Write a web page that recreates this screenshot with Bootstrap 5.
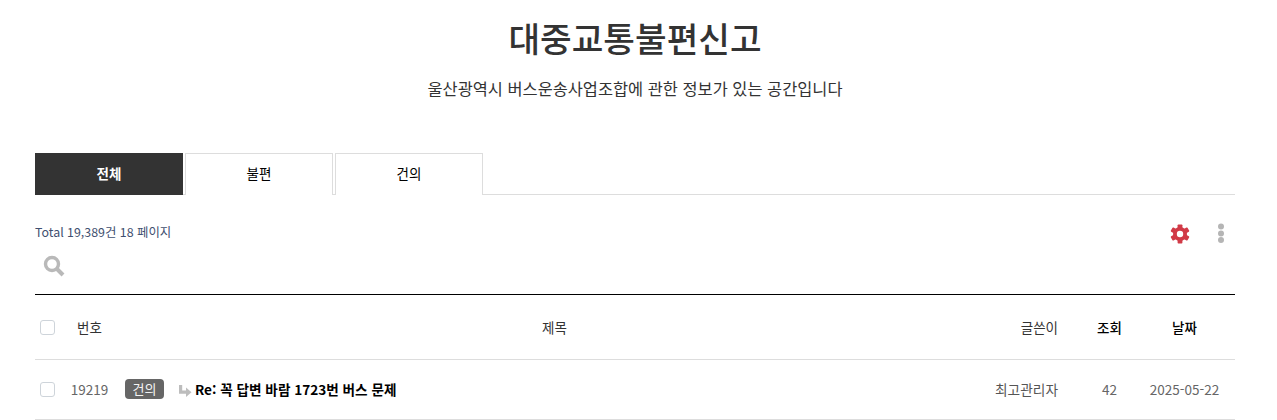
<!DOCTYPE html>
<html lang="ko">
<head>
<meta charset="utf-8">
<title>대중교통불편신고</title>
<link href="https://cdn.jsdelivr.net/npm/bootstrap@5.3.0/dist/css/bootstrap.min.css" rel="stylesheet">
<style>
html,body{overflow:hidden;height:420px}
body{font-family:"Noto Sans CJK KR","Noto Sans",sans-serif;color:#333;background:#fff;font-size:14px}
.wrapx{width:1200px;margin-left:35px}
.ptitle{font-size:34.4px;font-weight:500;line-height:50px;color:#333;margin:12px 0 0;text-align:center}
.psub{font-size:16.4px;line-height:24px;color:#333;margin:14px 0 0;text-align:center}
.tabsx{margin-top:53px;height:42px;border-bottom:1px solid #ddd;gap:2px}
.tabx{width:148px;height:42px;border:1px solid #ddd;border-bottom:0;background:#fff;color:#000;font-size:13.5px;display:flex;align-items:center;justify-content:center;text-decoration:none;padding-bottom:2px}
.tabx.on{background:#333;border-color:#333;color:#fff;font-weight:700}
.totalx{font-size:12.4px;line-height:18px;color:#3f4f70;margin-top:28px}
.toolsx{height:56px}
.gearx{margin-top:28px}
.dotsx{margin-left:27px;margin-right:10px}
.gearico{margin-top:1px}
.searchx{height:43px;padding:3px 0 0 8px}
.tblx{width:1200px;border-top:1px solid #000;border-collapse:collapse;table-layout:fixed;margin:0}
.tblx td,.tblx th{padding:0;vertical-align:middle;font-weight:400;border-bottom:1px solid #ddd;text-align:center}
.rowh td,.rowh th{height:65px;font-size:13.5px;color:#333}
.rowd td{height:60px;font-size:13.5px;color:#666}
.tblx .cellw{text-align:right;padding-right:27px}
.rowd .cellw{font-size:13.7px;color:#555}
.tblx .cellt{text-align:left;padding-left:11px}
.boxx{display:block;width:15px;height:15px;border:1px solid #ced4da;border-radius:3px;margin-left:5px;background:#fff}
.tagx{display:block;background:#666;color:#f4f4f4;border-radius:4px;font-size:13px;line-height:20px;width:39px;text-align:center;margin-bottom:2px}
.subj{color:#000;font-weight:700;font-size:13.6px;text-decoration:none;display:flex;align-items:center}
.arrx{margin-right:3px;margin-top:3px}
.headb{font-weight:500!important;color:#000!important}
</style>
</head>
<body>
<div class="wrapx">
  <h1 class="ptitle">대중교통불편신고</h1>
  <p class="psub">울산광역시 버스운송사업조합에 관한 정보가 있는 공간입니다</p>
  <nav class="tabsx d-flex">
    <a class="tabx on" href="#">전체</a>
    <a class="tabx" href="#">불편</a>
    <a class="tabx" href="#">건의</a>
  </nav>
  <div class="d-flex justify-content-between toolsx">
    <div class="totalx">Total 19,389건 18 페이지</div>
    <div class="d-flex gearx align-items-start">
      <svg class="gearico" width="20" height="20" viewBox="-10 -10 20 20" fill="#d13a47">
        <circle r="7"/>
        <rect x="-2.400" y="-9.600" width="4.800" height="19.200" rx=".8"/>
        <rect x="-2.400" y="-9.600" width="4.800" height="19.200" rx=".8" transform="rotate(60)"/>
        <rect x="-2.400" y="-9.600" width="4.800" height="19.200" rx=".8" transform="rotate(120)"/>
        <circle r="3.200" fill="#fff"/>
      </svg>
      <svg class="dotsx" width="8" height="22" viewBox="0 0 8 22"><circle cx="4" cy="3.500" r="3" fill="#b5b5b5"/><circle cx="4" cy="10.500" r="3" fill="#b5b5b5"/><circle cx="4" cy="17" r="3" fill="#b5b5b5"/></svg>
    </div>
  </div>
  <div class="searchx">
    <svg width="22" height="22" viewBox="0 0 22 22"><circle cx="9" cy="9" r="6.500" fill="none" stroke="#b9b9b9" stroke-width="3.400"/><path d="M14 14l6 6" stroke="#b9b9b9" stroke-width="4"/></svg>
  </div>
  <table class="tblx">
    <colgroup><col style="width:30px"><col style="width:49px"><col style="width:65px"><col style="width:816px"><col style="width:90px"><col style="width:49px"><col style="width:101px"></colgroup>
    <tr class="rowh">
      <td><span class="boxx"></span></td>
      <th>번호</th>
      <th colspan="2">제목</th>
      <th class="cellw">글쓴이</th>
      <th class="headb">조회</th>
      <th class="headb">날짜</th>
    </tr>
    <tr class="rowd">
      <td><span class="boxx"></span></td>
      <td>19219</td>
      <td class="cellt"><span class="tagx">건의</span></td>
      <td class="text-start"><a class="subj" href="#"><svg class="arrx" width="13" height="12" viewBox="0 0 13 12"><path fill="none" stroke="#bdbdbd" stroke-width="3.200" d="M1.600 0v7.200h6"/><path fill="#bdbdbd" d="M7 2.500l5.500 4.700L7 12z"/></svg>Re: 꼭 답변 바람 1723번 버스 문제</a></td>
      <td class="cellw">최고관리자</td>
      <td>42</td>
      <td>2025-05-22</td>
    </tr>
  </table>
</div>
<script src="https://cdn.jsdelivr.net/npm/bootstrap@5.3.0/dist/js/bootstrap.bundle.min.js"></script>
</body>
</html>
